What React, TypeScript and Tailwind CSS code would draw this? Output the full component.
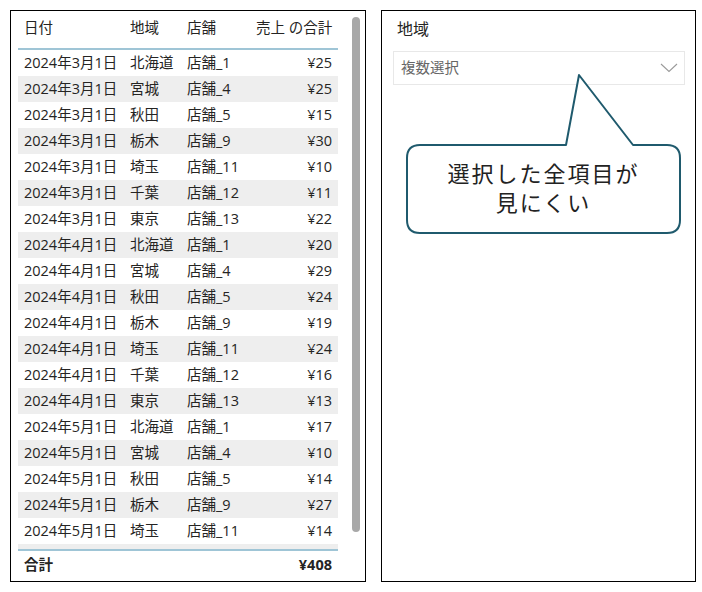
const rows: [string, string, string, string][] = [
  ["2024年3月1日", "北海道", "店舗_1", "¥25"],
  ["2024年3月1日", "宮城", "店舗_4", "¥25"],
  ["2024年3月1日", "秋田", "店舗_5", "¥15"],
  ["2024年3月1日", "栃木", "店舗_9", "¥30"],
  ["2024年3月1日", "埼玉", "店舗_11", "¥10"],
  ["2024年3月1日", "千葉", "店舗_12", "¥11"],
  ["2024年3月1日", "東京", "店舗_13", "¥22"],
  ["2024年4月1日", "北海道", "店舗_1", "¥20"],
  ["2024年4月1日", "宮城", "店舗_4", "¥29"],
  ["2024年4月1日", "秋田", "店舗_5", "¥24"],
  ["2024年4月1日", "栃木", "店舗_9", "¥19"],
  ["2024年4月1日", "埼玉", "店舗_11", "¥24"],
  ["2024年4月1日", "千葉", "店舗_12", "¥16"],
  ["2024年4月1日", "東京", "店舗_13", "¥13"],
  ["2024年5月1日", "北海道", "店舗_1", "¥17"],
  ["2024年5月1日", "宮城", "店舗_4", "¥10"],
  ["2024年5月1日", "秋田", "店舗_5", "¥14"],
  ["2024年5月1日", "栃木", "店舗_9", "¥27"],
  ["2024年5月1日", "埼玉", "店舗_11", "¥14"],
  ["2024年5月1日", "千葉", "店舗_12", "¥17"],
];

const font = "font-['Open_Sans','Noto_Sans_CJK_JP',sans-serif]";

function Row({ cells, striped }: { cells: string[]; striped?: boolean }) {
  return (
    <div className={`flex h-[26px] shrink-0 items-center whitespace-nowrap pb-[1px] text-[14.5px] text-[#252423] ${striped ? "bg-[#eeeeee]" : "bg-white"}`}>
      <span className="w-[106px] shrink-0 pl-[6px]">{cells[0]}</span>
      <span className="w-[57px] shrink-0 pl-[6px]">{cells[1]}</span>
      <span className="w-[75px] shrink-0 pl-[6px]">{cells[2]}</span>
      <span className="flex-1 pr-[6px] text-right">{cells[3]}</span>
    </div>
  );
}

function TablePanel() {
  return (
    <div className="relative flex h-[572px] w-[356px] flex-col border border-black bg-white">
      <div className="ml-[7px] flex w-[320px] flex-col">
        <div className="flex h-[39px] items-center whitespace-nowrap border-b-2 border-[#9fc5d6] pb-[3px] text-[14.5px] text-[#252423]">
          <span className="w-[106px] shrink-0 pl-[6px]">日付</span>
          <span className="w-[57px] shrink-0 pl-[6px]">地域</span>
          <span className="w-[75px] shrink-0 pl-[6px]">店舗</span>
          <span className="flex-1 pr-[6px] text-right">売上 の合計</span>
        </div>
        <div className="flex h-[499px] flex-col overflow-hidden">
          {rows.map((r, i) => (
            <Row key={i} cells={r} striped={i % 2 === 1} />
          ))}
        </div>
        <div className="flex h-[30px] items-center border-t-2 border-[#9fc5d6] text-[14.5px] font-bold text-[#252423]">
          <span className="flex-1 pl-[6px]">合計</span>
          <span className="pr-[6px]">¥408</span>
        </div>
      </div>
      {/* scrollbar */}
      <div className="absolute right-[5px] top-[6px] h-[515px] w-[8px] rounded-full bg-[#a8a8a8]" />
    </div>
  );
}

function SlicerPanel() {
  return (
    <div className="relative flex h-[572px] w-[315px] flex-col border border-black bg-white">
      <div className="flex h-[37px] items-center pb-[2px] pl-[15px] text-[16px] text-[#252423]">地域</div>
      <div className="ml-[11px] mt-[3px] flex h-[34px] w-[292px] items-center justify-between border border-[#e8e8e8] pl-[7px] pr-[6px] text-[14.5px] text-[#666666]">
        <span>複数選択</span>
        <svg width="18" height="10" viewBox="0 0 18 10">
          <path d="M1 1 L9 8.5 L17 1" fill="none" stroke="#9a9a9a" strokeWidth="1.1" />
        </svg>
      </div>

      {/* callout */}
      <div className="absolute left-0 top-0 h-[240px] w-[313px]">
        <svg width="313" height="240" className="absolute left-0 top-0">
          <path
            d="M38 134 L184 134 L197 64 L251 134 L285 134 Q298 134 298 147 L298 209 Q298 222 285 222 L38 222 Q25 222 25 209 L25 147 Q25 134 38 134 Z"
            fill="white"
            stroke="#1f5a6d"
            strokeWidth="2"
            strokeLinejoin="round"
          />
        </svg>
        <div className="absolute left-[25px] top-[134px] flex h-[88px] w-[273px] flex-col items-center justify-center pb-[3px] text-[22px] leading-[29px] tracking-[2px] text-[#222222]">
          <span>選択した全項目が</span>
          <span>見にくい</span>
        </div>
      </div>
    </div>
  );
}

export default function App() {
  return (
    <div className={`flex h-[592px] w-[702px] gap-[15px] bg-white pl-[10px] pt-[10px] ${font}`}>
      <TablePanel />
      <SlicerPanel />
    </div>
  );
}
